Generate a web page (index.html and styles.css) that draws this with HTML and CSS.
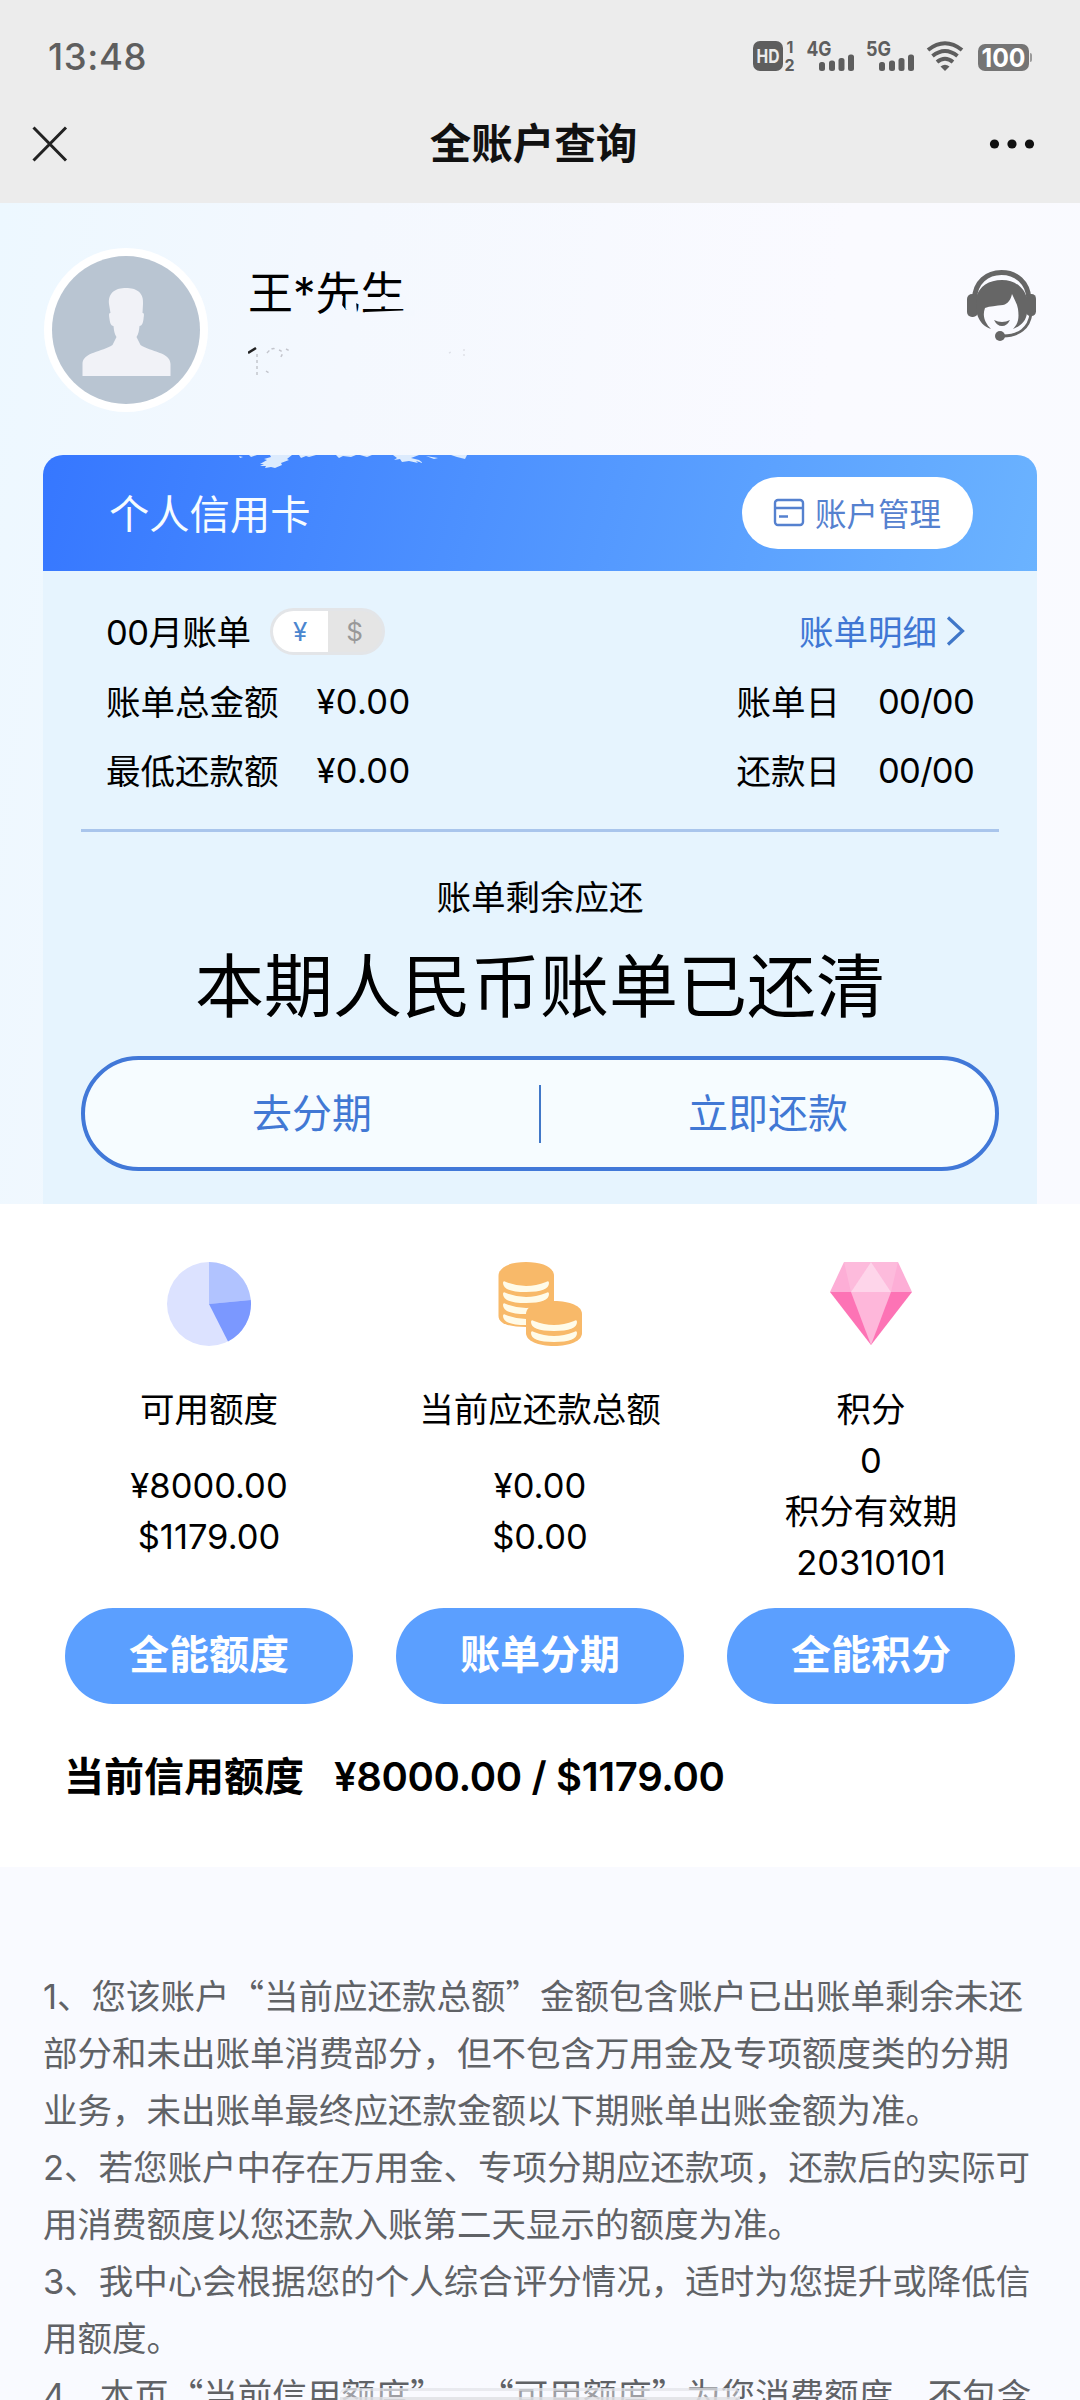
FILE: index.html
```html
<!DOCTYPE html>
<html lang="zh-CN">
<head>
<meta charset="utf-8">
<title>全账户查询</title>
<link rel="stylesheet" href="styles.css">
</head>
<body>
<div class="screen">
  <header class="top">
    <div class="status">
      <span class="clock">13:48</span>
      <svg class="status-icons" width="282" height="34" viewBox="0 0 282 34">
        <g fill="#5e5e5e">
          <rect x="1" y="1" width="30" height="30" rx="7"/>
          <text x="4.500" y="23" class="hd" textLength="23" lengthAdjust="spacingAndGlyphs">HD</text>
          <text x="34.500" y="13" class="tiny">1</text>
          <text x="32.500" y="31" class="tiny">2</text>
          <text x="54.500" y="15.500" class="net" textLength="25" lengthAdjust="spacingAndGlyphs">4G</text>
          <text x="114" y="15.500" class="net" textLength="25" lengthAdjust="spacingAndGlyphs">5G</text>
          <rect x="67" y="22" width="6" height="9" rx="2.500"/><rect x="77" y="20.500" width="6" height="10.500" rx="2.500"/><rect x="86.500" y="18" width="6" height="13" rx="2.500"/><rect x="96" y="14.500" width="6" height="16.500" rx="2.500"/>
          <rect x="127" y="22" width="6" height="9" rx="2.500"/><rect x="137" y="20.500" width="6" height="10.500" rx="2.500"/><rect x="146.500" y="18" width="6" height="13" rx="2.500"/><rect x="156" y="14.500" width="6" height="16.500" rx="2.500"/>
          <path d="M188.500 26.500q4.500-3.500 9 0l-4.500 4.500z"/>
        </g>
        <g fill="none" stroke="#5e5e5e" stroke-width="4">
          <path d="M176 10Q193-3.500 210 10M180.500 16Q193 6 205.500 16M185 22Q193 15.500 201 22"/>
        </g>
        <rect x="226" y="4" width="51" height="27" rx="7" fill="#757575"/>
        <path d="M278 13q2 0 2 2v5q0 2-2 2z" fill="#9a9a9a"/>
        <text x="229.500" y="26.500" class="battery" textLength="44" lengthAdjust="spacingAndGlyphs">100</text>
      </svg>
    </div>
    <nav class="nav">
      <svg width="36" height="36" viewBox="0 0 36 36" fill="none" stroke="#222" stroke-width="3"><path d="M1.500 1.500l32.500 33M34 1.500l-32.500 33"/></svg>
      <h1>全账户查询</h1>
      <svg width="46" height="12" viewBox="0 0 46 12" fill="#111"><circle cx="5.500" cy="6" r="4.600"/><circle cx="23" cy="6" r="4.600"/><circle cx="40.500" cy="6" r="4.600"/></svg>
    </nav>
  </header>

  <section class="hero">
    <div class="profile">
      <svg class="avatar" width="166" height="166" viewBox="0 0 166 166">
        <circle cx="83" cy="83" r="82" fill="#fff"/>
        <circle cx="83" cy="83" r="74" fill="#b9c5d2"/>
        <path fill="#f1f2f7" d="M66 57C65 45 73 41 83 41s18 4 17 16l-.5 9c2 0 1.500 2 1 6s-1.500 7-4 7c-.5 5-1 8-3 11l4 8c10 7 30 7 30 19v12h-88v-12c0-12 20-12 30-19l4-8c-2-3-2.500-6-3-11-2.500 0-3.500-3-4-7s-1-6 1-6z"/>
      </svg>
      <div class="who">
        <div class="name">王*先生
          <svg class="smudge" width="100" height="24" viewBox="0 0 100 24" fill="#f4f8fe">
            <path d="M17 2l6 0-1 9 4 5 6-4 0-6 4 1 1 12-24 4zM44 5l16-2 4-3 6 4-2 8-10 1-14 1zM76 4l10-2v12l-10-1zM45 18l50-2v6H45z"/>
          </svg>
        </div>
        <svg class="trace" width="230" height="34" viewBox="0 0 230 34" fill="none">
          <path d="M0 8l8-5" stroke="#222" stroke-width="2.500"/><path d="M9 9v22M19 8q5-6 8-4M18 26l3 2M31 5q6 2 1 8M38 4l4 2" stroke="#c4c6cd" stroke-width="1.500" stroke-dasharray="3 3"/><path d="M201 8l4-2M216 4v10" stroke="#dfe1e8" stroke-width="1.500" stroke-dasharray="2 3"/>
        </svg>
      </div>
      <svg class="service" width="70" height="74" viewBox="0 0 70 74">
        <path d="M7.500 29C8 12 20 2.500 34.500 2.500S61 12 62 29" fill="none" stroke="#666" stroke-width="5"/>
        <rect x="0" y="24" width="11" height="23" rx="5" fill="#666"/><rect x="59" y="24" width="10" height="22" rx="4.500" fill="#666"/>
        <path d="M9 28C12 16 22 10 35 10s23 8 25 19v14c-1 8-6 13-14 16 6-6 6-12 5-20-1-6-4-10-6-15-1 5-4 10-9 11-7 1-13 1-18 3-3 8 0 15 6 21-7-2-12-8-14-15z" fill="#666"/>
        <path d="M27 50q8 4 16 0-3 6-8 6t-8-6z" fill="#666"/>
        <path d="M64 44C62 58 52 66 36 66" fill="none" stroke="#666" stroke-width="2.800"/><circle cx="33" cy="66" r="5" fill="#666"/>
      </svg>
    </div>

    <div class="card">
      <div class="card-head">
        <svg class="scuff" width="230" height="16" viewBox="0 0 230 16" fill="#dcebfd">
          <path d="M0 1l4 1-3 1zM10 0h8l-6 2zM21 9l7-4-3-1 7-2-1-2h22l-5 4 2 1-8 3 1 2-7 3-4-1-6 1 1-2-6 0 4-2zM60 0h17l-7 2-3-1-5 2zM97 0h20l-5 2-8-1-4 2zM121 0h12l-5 2zM154 0h26l-8 3 8 2 4 3-7-2 2 2-9-2-7 1-2-3-6 1 3-2zM187 1l12 2-4 1zM212 0h16l-2 4-8-2z"/>
        </svg>
        <h2>个人信用卡</h2>
        <a class="manage">
          <svg width="32" height="30" viewBox="0 0 32 30" fill="none" stroke="#5581cf" stroke-width="2.400"><rect x="2" y="2" width="28" height="25" rx="3"/><path d="M2 10h28M6 18.500h9"/></svg>
          <span>账户管理</span>
        </a>
      </div>
      <div class="card-body">
        <div class="row first">
          <span class="bill">00月账单</span>
          <span class="toggle"><b>¥</b><i>$</i></span>
          <a class="detail"><span>账单明细</span><svg width="20" height="32" viewBox="0 0 20 32" fill="none" stroke="#4077c8" stroke-width="3.200"><path d="M2 2.500l14.500 13.500-14.500 13.500"/></svg></a>
        </div>
        <div class="row"><span class="label">账单总金额</span><span class="num">¥0.00</span><span class="label push">账单日</span><span class="num date">00/00</span></div>
        <div class="row"><span class="label">最低还款额</span><span class="num">¥0.00</span><span class="label push">还款日</span><span class="num date">00/00</span></div>
        <hr>
        <p class="remain">账单剩余应还</p>
        <p class="cleared">本期人民币账单已还清</p>
        <div class="actions"><a>去分期</a><span class="bar"></span><a>立即还款</a></div>
      </div>
    </div>
  </section>

  <section class="summary">
    <div class="cols">
      <div class="col">
        <svg width="86" height="86" viewBox="0 0 86 86"><circle cx="43" cy="43" r="42" fill="#dce2ff"/><path d="M43 43V1a42 42 0 0 1 41.800 38z" fill="#b1c3ff"/><path d="M43 43l41.800-4A42 42 0 0 1 62 80.500z" fill="#7b98ff"/></svg>
        <h3>可用额度</h3>
        <div class="vals two"><span>¥8000.00</span><span>$1179.00</span></div>
        <a class="btn">全能额度</a>
      </div>
      <div class="col">
        <svg width="86" height="86" viewBox="0 0 86 86">
          <path d="M1.500 15C1.500 6 13 1 29 1s28 5 28 14v40c0 7-12 11-28 11S1.500 63 1.500 55z" fill="#f8b969"/>
          <g fill="#fffbe9"><path d="M6 22q0-3 3-1 20 8 40 0 3-2 3 1 0 9-23 9T6 22z"/><path d="M6 33q0-3 3-1 20 8 40 0 3-2 3 1 0 9-23 9T6 33zM6 44q0-3 3-1 20 8 40 0 3-2 3 1 0 9-23 9T6 44zM6 55q0-3 3-1 20 8 40 0 3-2 3 1 0 9-23 9T6 55z"/></g>
          <path d="M29 53c0-8 12-13 28-13s28 5 28 13v19c0 8-12 13-28 13s-28-5-28-13z" fill="#f8b969"/>
          <g fill="#fffbe9"><path d="M34 61q0-3 3-1 20 8 40 0 3-2 3 1 0 9-23 9T34 61zM34 72q0-3 3-1 20 8 40 0 3-2 3 1 0 9-23 9T34 72z"/></g>
        </svg>
        <h3>当前应还款总额</h3>
        <div class="vals two"><span>¥0.00</span><span>$0.00</span></div>
        <a class="btn">账单分期</a>
      </div>
      <div class="col">
        <svg width="86" height="86" viewBox="0 0 86 86"><path d="M16 1h54l14 30H2z" fill="#fdaed6"/><path d="M16 1h27L23 31z M70 1H43l20 30z" fill="#fdbbdc"/><path d="M43 1l20 30H23z" fill="#fed5ea"/><path d="M2 31h82L43 84z" fill="#fd73b5"/><path d="M23 31h40L43 84z" fill="#feb7da"/></svg>
        <h3>积分</h3>
        <div class="vals"><span>0</span><span>积分有效期</span><span>20310101</span></div>
        <a class="btn">全能积分</a>
      </div>
    </div>
    <p class="limit"><span>当前信用额度</span><span class="sum">¥8000.00 / $1179.00</span></p>
  </section>

  <section class="notes">
    <p><b>1</b>、您该账户“当前应还款总额”金额包含账户已出账单剩余未还</p>
    <p>部分和未出账单消费部分，但不包含万用金及专项额度类的分期</p>
    <p>业务，未出账单最终应还款金额以下期账单出账金额为准。</p>
    <p><b>2</b>、若您账户中存在万用金、专项分期应还款项，还款后的实际可</p>
    <p>用消费额度以您还款入账第二天显示的额度为准。</p>
    <p><b>3</b>、我中心会根据您的个人综合评分情况，适时为您提升或降低信</p>
    <p>用额度。</p>
    <p><b>4</b>、本页“当前信用额度”、“可用额度”为您消费额度，不包含</p>
  </section>
  <div class="home"></div>
</div>
</body>
</html>
```
FILE: styles.css
```css
* { box-sizing: border-box; }
body, h1, h2, h3, p { margin: 0; font-weight: 400; }
body { background: #f9faff; }
.screen {
  position: relative;
  width: 1080px;
  height: 2400px;
  overflow: hidden;
  font-family: Inter, "Noto Sans CJK SC", sans-serif;
  font-size: 34.5px;
  color: #000;
  white-space: nowrap;
}
.top { height: 203px; background: #ececec; }
.status {
  display: flex;
  align-items: center;
  justify-content: space-between;
  height: 110px;
  padding: 4px 46px 0 48px;
}
.clock { font-size: 36.5px; font-weight: 500; color: #5e5e5e; letter-spacing: 0.6px; }
.status-icons { display: block; overflow: visible; }
.status-icons text { font-family: Inter, sans-serif; font-weight: 700; }
.status-icons .hd { font-size: 19px; fill: #ececec; }
.status-icons .tiny { font-size: 16px; }
.status-icons .net { font-size: 20px; }
.status-icons .battery { font-size: 26px; fill: #fff; }
.nav {
  display: grid;
  grid-template-columns: 1fr auto 1fr;
  align-items: center;
  height: 67px;
  padding: 0 45px 0 32px;
}
.nav svg:last-child { justify-self: end; }
.nav h1 { font-size: 41.5px; font-weight: 600; line-height: 60px; color: #111; }

.hero {
  height: 1001px;
  padding: 0 43px;
  background: linear-gradient(98deg, #edf8ff 0%, #f4f8fe 30%, #fafaff 70%, #f9faff 100%);
}
.profile { display: flex; height: 252px; padding-top: 44px; }
.avatar { flex: none; }
.who { margin-left: 39px; padding-top: 18px; }
.name { position: relative; font-size: 45px; line-height: 58px; }
.smudge { position: absolute; left: 72px; top: 29px; }
.trace { display: block; margin-top: 22px; }
.service { margin: 23px 0 0 auto; }

.card { height: 749px; background: #e6f4fe; border-radius: 20px 20px 0 0; overflow: hidden; }
.card-head {
  position: relative;
  display: flex;
  align-items: center;
  justify-content: space-between;
  height: 116px;
  padding: 0 64px 0 66px;
  background: linear-gradient(105deg, #3677ff, #6bb3ff);
}
.scuff { position: absolute; left: 196px; top: 0; }
.card-head h2 { font-size: 40.3px; color: #f6fcff; padding-bottom: 4px; }
.manage {
  display: flex;
  align-items: center;
  gap: 10px;
  height: 72px;
  padding: 0 32px 0 31px;
  border-radius: 36px;
  background: #fff;
  color: #5581cf;
  font-size: 31.5px;
}
.manage span { padding-bottom: 3px; }
.card-body { padding: 24px 38px 0; }
.row { display: flex; align-items: center; height: 69px; padding: 0 25px; }
.row.first { height: 72px; }
.bill { letter-spacing: -0.5px; padding-bottom: 3px; }
.label { padding-bottom: 3px; }
.num { margin-left: 38px; letter-spacing: 0.3px; }
.num.date { letter-spacing: -0.7px; }
.label.push { margin-left: auto; }
.toggle {
  display: flex;
  width: 115px;
  height: 47px;
  margin-left: 19px;
  border: 3px solid #e3e5e8;
  border-radius: 24px;
  overflow: hidden;
  background: #e5e5e5;
  font-size: 26px;
  line-height: 42px;
  text-align: center;
}
.toggle b { width: 55px; background: #fff; color: #4b86cf; font-weight: 400; }
.toggle i { flex: 1; color: #999; font-style: normal; }
.detail { display: flex; align-items: center; gap: 9px; margin-left: auto; padding-right: 8px; color: #4077d4; }
.detail span { padding-bottom: 3px; }
hr { height: 3px; margin: 24px 0 0; border: 0; background: #a9c5ec; }
.remain { margin-top: 39px; line-height: 54px; text-align: center; }
.cleared { font-size: 69px; line-height: 100px; margin-top: 12px; text-align: center; }
.actions {
  display: flex;
  align-items: center;
  height: 115px;
  margin-top: 19px;
  border: 4px solid #4178d8;
  border-radius: 58px;
  background: #f6fcff;
  color: #4178d4;
  font-size: 40px;
}
.actions a { flex: 1; text-align: center; padding-bottom: 5px; }
.bar { width: 2px; height: 58px; background: #4178c8; }

.summary { height: 663px; background: #fff; padding: 57px 65px 0; }
.cols { display: grid; grid-template-columns: repeat(3, 288px); column-gap: 43px; }
.col { display: flex; flex-direction: column; align-items: center; }
.col h3 { font-size: 34.5px; line-height: 51px; margin-top: 37px; }
.vals { height: 173px; display: flex; flex-direction: column; align-items: center; line-height: 51px; }
.vals.two { padding-top: 25px; }
.btn {
  width: 288px;
  height: 96px;
  border-radius: 48px;
  background: #5b9fff;
  color: #fff;
  font-size: 40px;
  font-weight: 700;
  line-height: 94px;
  text-align: center;
}
.limit { display: flex; gap: 30px; margin-top: 41px; margin-left: -1px; font-size: 40px; font-weight: 600; line-height: 64px; }
.sum { letter-spacing: -0.35px; }

.notes {
  padding: 99px 0 0 43px;
  color: #606266;
  font-family: "Noto Sans CJK SC", sans-serif;
  font-size: 34.5px;
  line-height: 57px;
  text-spacing-trim: space-all;
}
.notes p { height: 57px; }
.notes b { font-family: Inter, sans-serif; font-weight: 400; line-height: 1; }
.home {
  position: absolute;
  left: 340px;
  top: 2388px;
  width: 400px;
  height: 12px;
  border-top: 3px solid rgba(222, 223, 228, 0.6);
  border-bottom: 3px solid rgba(222, 223, 228, 0.8);
  border-radius: 6px 6px 0 0;
  background: rgba(249, 250, 255, 0.4);
}
```
